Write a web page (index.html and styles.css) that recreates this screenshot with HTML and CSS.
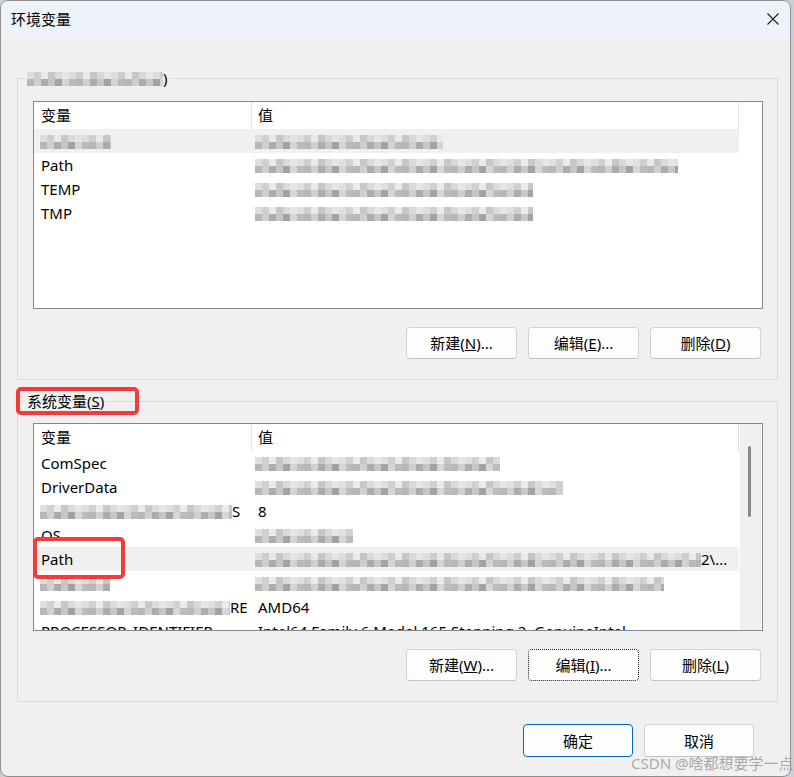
FILE: index.html
```html
<!DOCTYPE html>
<html lang="zh-CN">
<head>
<meta charset="utf-8">
<title>环境变量</title>
<link rel="stylesheet" href="styles.css">
</head>
<body>
<div class="window">
  <div class="titlebar">
    <span class="title">环境变量</span>
    <svg class="close" width="12" height="12" viewBox="0 0 12 12"><path d="M0.5 0.5L11.5 11.5M11.5 0.5L0.5 11.5" stroke="#1a1a1a" stroke-width="1.1" fill="none"/></svg>
  </div>
  <div class="content">
    <fieldset class="group">
      <legend class="legend"><span class="mosaic m-legend"></span>)</legend>
      <div class="group-inner gi-user">
        <div class="list">
          <div class="list-main">
            <div class="row header"><div class="cell">变量</div><div class="cell">值</div></div>
            <div class="row sel"><div class="cell"><span class="mosaic mn w71"></span></div><div class="cell"><span class="mosaic mv w188"></span></div></div>
            <div class="row"><div class="cell">Path</div><div class="cell"><span class="mosaic mv w423"></span></div></div>
            <div class="row"><div class="cell">TEMP</div><div class="cell"><span class="mosaic mv w278"></span></div></div>
            <div class="row"><div class="cell">TMP</div><div class="cell"><span class="mosaic mv w278"></span></div></div>
          </div>
          <div class="gutter"></div>
        </div>
        <div class="btn-row">
          <button class="btn">新建(<u>N</u>)...</button>
          <button class="btn">编辑(<u>E</u>)...</button>
          <button class="btn">删除(<u>D</u>)</button>
        </div>
      </div>
    </fieldset>

    <fieldset class="group">
      <legend class="legend">系统变量(<u>S</u>)<span class="mark mark-legend"></span></legend>
      <div class="group-inner gi-sys">
        <div class="list">
          <div class="list-main">
            <div class="row header"><div class="cell">变量</div><div class="cell">值</div></div>
            <div class="row"><div class="cell">ComSpec</div><div class="cell"><span class="mosaic mv w245"></span></div></div>
            <div class="row"><div class="cell">DriverData</div><div class="cell"><span class="mosaic mv w308"></span></div></div>
            <div class="row"><div class="cell"><span class="mosaic mn w192"></span>S</div><div class="cell">8</div></div>
            <div class="row"><div class="cell">OS</div><div class="cell"><span class="mosaic mv w98"></span></div></div>
            <div class="row sel"><div class="cell">Path</div><div class="cell"><span class="mosaic mv w446"></span>2\...</div></div>
            <div class="row"><div class="cell"><span class="mosaic mn w70"></span></div><div class="cell"><span class="mosaic mv w409"></span></div></div>
            <div class="row"><div class="cell"><span class="mosaic mn w190"></span>RE</div><div class="cell">AMD64</div></div>
            <div class="row"><div class="cell">PROCESSOR_IDENTIFIER</div><div class="cell">Intel64 Family 6 Model 165 Stepping 2, GenuineIntel</div></div>
          </div>
          <div class="gutter"><div class="track"><div class="thumb"></div></div></div>
          <span class="mark mark-path"></span>
        </div>
        <div class="btn-row">
          <button class="btn">新建(<u>W</u>)...</button>
          <button class="btn focus">编辑(<u>I</u>)...</button>
          <button class="btn">删除(<u>L</u>)</button>
        </div>
      </div>
    </fieldset>

    <div class="dlg-btns">
      <button class="btn dlg primary">确定</button>
      <button class="btn dlg">取消</button>
    </div>
  </div>
</div>
<div class="watermark">CSDN @啥都想要学一点</div>
</body>
</html>
```

FILE: styles.css
```css
* { box-sizing: border-box; }
html, body { margin: 0; height: 777px; }
body {
  background: #cfcfcf;
  font-family: "Noto Sans", "Noto Sans CJK SC", sans-serif;
  font-size: 15px;
  color: #000;
  position: relative;
  overflow: hidden;
}
.window {
  width: 791px;
  height: 777px;
  border: 1px solid #8f8f8f;
  border-radius: 8px;
  background: #f0f0f0;
  overflow: hidden;
  display: flex;
  flex-direction: column;
}
.titlebar {
  height: 37px;
  flex: none;
  background: #eef2f9;
  display: flex;
  align-items: center;
  justify-content: space-between;
  padding: 0 11px 1px 10px;
}
.title { line-height: 20px; }
.content { padding: 30px 12px 0 16px; }
.group {
  margin: 0;
  padding: 0;
  border: 1px solid #dcdcdc;
  min-width: 0;
}
.group + .group { margin-top: 11px; }
.legend {
  margin-left: 7px;
  padding: 0 2px;
  line-height: 20px;
  height: 20px;
  position: relative;
  white-space: nowrap;
}
.group-inner { padding: 13px 14px 20px 15px; }
.gi-sys { padding-top: 12px; }
.list {
  height: 208px;
  border: 1px solid #828790;
  background: #fff;
  display: flex;
  position: relative;
}
.list-main { width: 705px; flex: none; overflow: hidden; }
.gutter { flex: 1; padding: 0 1px; }
.track { height: 100%; background: #f0f0f0; position: relative; }
.thumb {
  position: absolute;
  left: 8px;
  top: 22px;
  width: 3px;
  height: 71px;
  border-radius: 2px;
  background: #8a8a8a;
}
.row {
  display: grid;
  grid-template-columns: 218px 487px;
  height: 24px;
  line-height: 24px;
  white-space: nowrap;
}
.row .cell { overflow: hidden; padding-left: 6px; }
.row .cell:first-child { padding-left: 7px; }
.row.header { height: 27px; line-height: 26px; }
.row.header .cell { border-right: 1px solid #e3e3e3; }
.row.sel { background: #f0f0f0; }
.mosaic {
  display: inline-block;
  height: 14px;
  vertical-align: -2px;
  background-image:
    repeating-linear-gradient(90deg, #dcdcde 0 7px, #cbcbcd 7px 14px, #e9e9e9 14px 21px, #c2c2c5 21px 28px, #d8d6d6 28px 35px, #e4e4e6 35px 42px),
    repeating-linear-gradient(90deg, #b0b0b4 0 7px, #cccccc 7px 14px, #a4a4a8 14px 21px, #c2c2c2 21px 28px, #9a9a9e 28px 35px, #d2d2d2 35px 42px, #b8b4b4 42px 49px);
  background-size: 100% 7px, 100% 7px;
  background-position: 0 0, 0 7px;
  background-repeat: no-repeat;
  opacity: .9;
}
.mn { margin-left: -1px; }
.mv { margin-left: -3px; }
.m-legend { width: 136px; margin-left: 0; }
.w70 { width: 70px; }
.w71 { width: 71px; }
.w98 { width: 98px; }
.w188 { width: 188px; }
.w190 { width: 190px; }
.w192 { width: 192px; }
.w245 { width: 245px; }
.w278 { width: 278px; }
.w308 { width: 308px; }
.w409 { width: 409px; }
.w423 { width: 423px; }
.w446 { width: 446px; }
.btn-row {
  display: flex;
  justify-content: flex-end;
  gap: 11px;
  margin-top: 18px;
  padding-right: 2px;
}
.btn {
  width: 111px;
  height: 32px;
  border: 1px solid #d3d3d3;
  border-bottom-color: #c2c2c2;
  border-radius: 4px;
  background: #fdfdfd;
  font: inherit;
  color: #000;
  padding: 0;
  display: flex;
  align-items: center;
  justify-content: center;
  line-height: 20px;
}
.btn.focus { border: 1px dotted #1a1a1a; }
.dlg-btns {
  display: flex;
  justify-content: flex-end;
  gap: 11px;
  padding: 22px 24px 0 0;
}
.btn.dlg { width: 110px; height: 33px; }
.btn.primary { border: 1px solid #0067c0; }
.mark {
  position: absolute;
  border: 4px solid #f23b3b;
  border-radius: 5px;
  pointer-events: none;
}
.mark-legend { left: -9px; top: -4px; width: 123px; height: 28px; }
.mark-path { left: -1px; top: 113px; width: 92px; height: 42px; }
.watermark {
  position: absolute;
  left: 631px;
  top: 753px;
  font-size: 15px;
  line-height: 20px;
  color: rgba(150, 150, 150, .8);
  white-space: nowrap;
}
```
